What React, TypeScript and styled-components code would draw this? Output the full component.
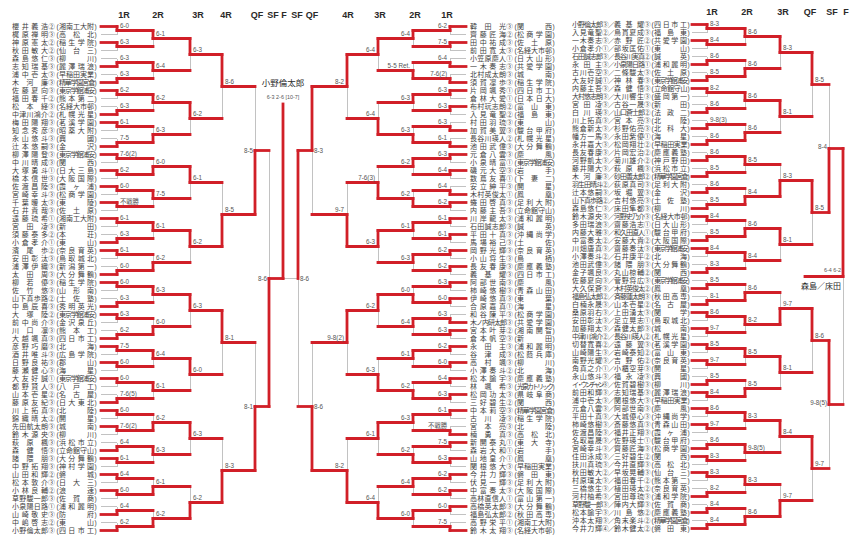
import React from 'react'
import styled, { createGlobalStyle } from 'styled-components'

const GlobalStyle = createGlobalStyle`
  html, body {
    margin: 0;
    padding: 0;
    background: #fff;
  }
  body {
    font-family: 'Liberation Sans', 'Noto Sans CJK JP', sans-serif;
  }
`

const RED = '#d11f28'
const GRAY = '#c2c2c2'
const GRADE = ['', '①', '②', '③', '④']

type SEntry = [string, number, string]
type DEntry = [string, number, string, number, string]
type Seg = [number, number, number, number, boolean]
type Label = { x: number; y: number; t: string; a: 'start' | 'end' | 'middle' }

const LEFT: SEntry[] = [
  ['櫻井義浩', 2, '湘南工大附'], ['梶原禅明', 3, '高松北'], ['神原憲太', 2, '稲生学院'], ['秋田敏大', 2, '仙台三'],
  ['森島悠仁', 3, '柳川'], ['志知瑞基', 3, '麗澤瑞浪'], ['浦中壱太', 3, '早稲田実業'], ['木河廉', 3, '精華学園宮倉'],
  ['佐藤夏向', 3, '東京学館浦安'], ['福田春千', 2, '熊本第二'], ['松本経', 3, '名経大市邨'], ['中津川鴻介', 2, '札幌光星'],
  ['梅田陽翔', 3, '茗溪学園'], ['知念秀彦', 3, '昭薬大附'], ['永山悠斗', 3, '興國'], ['辻本悠嗣', 3, '金沢'],
  ['柳澤陽登', 3, '東京学館浦安'], ['中川晴成', 3, '関西'], ['大塚勇斗', 1, '日大三島'], ['橋本信世', 3, '大阪国際'],
  ['佐渡昌陸', 3, '霞ヶ浦'], ['宮崎幸斗', 3, '松商学園'], ['千葉暖太', 3, '東陵'], ['石井貴哉', 3, '佐土原'],
  ['遠藤琉希', 1, '湘南工大附'], ['宮田凌', 3, '新田'], ['須藤泰多', 2, '本荘'], ['小倉孝介', 1, '東山'],
  ['濱尾歩', 2, '奈良育英'], ['安田彰汰', 3, '鳥取城北'], ['浦澤伊織', 3, '新潟第一'], ['太田周', 3, '大分舞鶴'],
  ['柳若優', 3, '稲生学院'], ['佐竹悠', 3, '山形南'], ['山下真歩路', 2, '土佐塾'], ['中島辰喜', 3, '秀明英光'],
  ['大塚陸', 2, '東京学館浦安'], ['前中尚介', 3, '金沢泉丘'], ['川口凛', 3, '熊本工'], ['大越颯真', 3, '四日市工'],
  ['彦野巧磨', 3, '北海'], ['酒井唯斗', 3, '広島学院'], ['日野良祐', 3, '郡山'], ['藤瀬健心', 3, '海星'],
  ['大友好誠', 1, '東京学館浦安'], ['都野賢人', 3, '八戸工'], ['山本壱星', 2, '名古屋'], ['藤原友紀', 3, '日大東北'],
  ['川上拓真', 3, '北陸'], ['錦織晴太', 2, '開星'], ['先田航太朗', 3, '城南'], ['鈴木源央', 3, '柳川'],
  ['萩原楓', 3, '浜松市立'], ['森健悟', 3, '立命館守山'], ['諸隈朋', 3, '大分舞鶴'], ['中野拓翔', 3, '神村学園'],
  ['山田和輝', 2, '磐城'], ['松本敦介', 3, '日大三'], ['小林良輔', 2, '浪速'], ['草野駿一郎', 3, '佐賀商'],
  ['小泉陽日路', 1, '浦和麗明'], ['山崎敬史', 3, '防府'], ['中嶋啓志', 2, '東山'], ['小野倫太郎', 3, '四日市工'],
]

const RIGHT: SEntry[] = [
  ['韓田光', 3, '関西'], ['齊藤匠海', 2, '松商学園'], ['田中祐成', 3, '佐土原'], ['前田寛太', 3, '名経大市邨'],
  ['小笠原慶人', 1, '日大山形'], ['一木奏志', 3, '共愛学園'], ['北村成太朗', 3, '城南'], ['須賀凜歩', 3, '稲生学院'],
  ['片岡颯秀', 1, '四日市工'], ['倉林大愛', 1, '日本日大'], ['布村玩志朗', 2, '富山東'], ['入見竜聖', 2, '福島東'],
  ['村田羽琉', 3, '東山'], ['加賀美翼', 3, '駿台甲府'], ['長谷川瑛人', 2, '札幌光星'], ['池田武偉', 3, '大分舞鶴'],
  ['元倉八雲', 3, '慶風'], ['小泉晴富', 1, '東京学館浦安'], ['磯元大空', 3, '岩手'], ['数蔦友喜', 1, '下妻二'],
  ['安立紳平', 3, '開星'], ['木村英俊太', 1, '鳳凰'], ['蜷田啓真', 3, '足利大附'], ['内藤主吾', 3, '立命館守山'],
  ['川岸龍太', 3, '浦和麗明'], ['石田誠志郎', 3, '誠英'], ['平田十真', 3, '沖縄尚学'], ['馬場裕己', 3, '土佐'],
  ['岡野光輝', 3, '奈良育英'], ['小山将生', 3, '鳥栖'], ['長友春康', 3, '慶應義塾'], ['義基耀', 3, '四日市工'],
  ['阿部世南', 3, '慶風'], ['柿崎悠樹', 3, '青森山田'], ['伊崎悠真', 3, '東葉'], ['合原嘉真', 1, '海星'],
  ['和谷陳平', 3, '松商学園'], ['木ノ内研太郎', 3, '共愛学園'], ['宮本叶芽', 2, '湘南開智'], ['倉本帆空', 3, '新田'],
  ['永田主', 3, '浦和麗明'], ['谷津成', 3, '松蔭兵庫'], ['高村颯', 3, '柳川'], ['小澤奏斗', 2, '北海'],
  ['松本諭宇', 3, '慶應義塾'], ['林颯希', 3, '光泉カトリック'], ['松岡功太', 3, '県岐阜商'], ['三好碧生', 2, '関西'],
  ['中本莉空', 3, '精華学園宮倉'], ['古川凌', 3, '稲生学院'], ['宮本亮', 3, '北陸'], ['楠勇真', 3, '高松北'],
  ['新開泰丸', 1, '東大寺'], ['森岩大和', 1, '岩手'], ['山地皇介', 1, '鳳凰'], ['関根悠大', 3, '早稲田実業'],
  ['今井力輝', 3, '磐田東'], ['伏見一輝', 3, '足利大附'], ['中富奏太', 3, '大阪国際'], ['高林直信人', 1, '富山第一'],
  ['高橋英太郎', 3, '大分舞鶴'], ['福島弘太郎', 2, '秋田高専'], ['高野栄平', 1, '湘南工大附'], ['鈴木太翔', 3, '名経大市邨'],
]

const DOUBLES: DEntry[] = [
  ['小野倫太郎', 3, '義基耀', 3, '四日市工'], ['入見竜聖', 2, '鳥貫夏成', 3, '福島東'],
  ['一木奏志', 3, '赤野匠', 2, '共愛学園'], ['小倉孝介', 1, '部坂匡佑', 1, '東山'],
  ['石田誠志郎', 3, '長谷川実真', 2, '誠英'], ['永田主', 3, '小泉陽日路', 1, '浦和麗明'],
  ['古川壱空', 3, '二條駿太', 3, '佐土原'], ['大友好誠', 1, '神林春', 3, '東京学館浦安'],
  ['内藤主吾', 3, '森健悟', 3, '立命館守山'], ['大村悠志朗', 3, '大川響生', 3, '盛岡第一'],
  ['宮田凌', 3, '古谷一晟', 3, '新田'], ['白川瑛', 3, '山口蒼士郎', 2, '法政二'],
  ['川上拓真', 3, '宮本亮', 3, '北陸'], ['熊倉新太', 3, '杉野佑亮', 3, '北科大'],
  ['幡方一馬', 3, '永田紫優', 1, '海星'], ['永井嘉大', 3, '松岡翔壮', 2, '早稲田実業'],
  ['長友春康', 3, '片岡宏治', 2, '慶應義塾'], ['河野凱太', 3, '菊川雄介', 2, '神戸野田'],
  ['藤井陽大', 3, '萩原楓', 3, '浜松市立'], ['木河廉', 3, '砂田善太郎', 2, '精華学園宮倉'],
  ['羽生田晴斗', 2, '荻原真司', 3, '足利大附'], ['辻本悠嗣', 3, '坂堀翼', 3, '金沢'],
  ['山下真歩路', 2, '吉村悠亮', 3, '土佐塾'], ['森島悠仁', 3, '床田隼都', 3, '柳川'],
  ['鈴木源央', 3, '河野史乃介', 3, '名経大市邨'], ['多田瑞浪', 3, '齋藤浩志', 1, '日大山形'],
  ['内藤大雅', 3, '和久田直人', 1, '駿台甲府'], ['中富奏太', 2, '安藤大貴', 2, '大阪国際'],
  ['川畑唐真', 3, '齋藤奏汰', 3, '東京学館浦安'], ['小澤奏斗', 2, '石井康平', 2, '北海'],
  ['池田武偉', 3, '諸隈朋', 3, '大分舞鶴'], ['金子颯良', 3, '丸山椋輔', 2, '関西'],
  ['佐藤夏向', 3, '菅野将広', 3, '東京学館浦安'], ['大久保蒼', 3, '木村英俊太', 2, '鳳凰'],
  ['福島弘太郎', 2, '斉藤蓮太朗', 3, '秋田高専'], ['白楠永晟', 3, '山本壱星', 2, '名古屋'],
  ['桑原羽右', 3, '上田湧太', 3, '関学'], ['安田彰汰', 3, '足立晃志', 1, '鳥取城北'],
  ['加藤翔太', 3, '森健太郎', 3, '城南'], ['中津川鴻介', 2, '長谷川瑛人', 2, '札幌光星'],
  ['切替寛喜', 2, '遠藤翼', 3, '茗溪学園'], ['山崎陽生', 3, '岩崎泰知', 2, '富山東'],
  ['南野光耀', 3, '吉野佑', 2, '奈良育英'], ['角真之介', 1, '小櫃空芽', 3, '開星'],
  ['永山悠斗', 3, '福永凌', 3, '興國'], ['イ・ウンチャン', 3, '佐賀碧樹', 3, '柳川'],
  ['前田和輝', 3, '志知瑞基', 3, '麗澤瑞浪'], ['浦中壱太', 3, '関根悠大', 3, '早稲田実業'],
  ['元倉八雲', 3, '阿部世南', 3, '慶風'], ['平田十真', 3, '大城優心', 3, '沖縄尚学'],
  ['柿崎悠樹', 3, '斎藤悠真', 3, '青森山田'], ['佐渡昌陸', 3, '福井正翔', 3, '霞ヶ浦'],
  ['名取嘉晟', 3, '佐野瑛士', 1, '駿台甲府'], ['宮崎幸斗', 3, '齊藤匠海', 3, '松商学園'],
  ['住田泳成', 3, '三好碧生', 2, '関西'], ['扶川真琉', 3, '今井直輝', 3, '高松北'],
  ['秋田敏大', 2, '早坂晃輔', 3, '仙台三'], ['村原璞太', 3, '福田春千', 2, '熊本第二'],
  ['三橋悠生', 3, '植田瑛太', 2, '奈良育英'], ['河村柚希', 3, '宮田尊琉', 3, '浦和学院'],
  ['草野駿一郎', 3, '陣内大輝', 3, '佐賀商'], ['松本諭宇', 3, '川島悠', 2, '慶應義塾'],
  ['沖本太翔', 3, '角末楽斗', 2, '精華学園宮倉'], ['今井力輝', 4, '鈴木健太', 2, '磐田東'],
]

// winners per round: 0 = upper entry, 1 = lower entry
const LEFT_WIN = [
  [0, 0, 1, 1, 0, 1, 0, 1, 0, 0, 0, 0, 0, 1, 0, 1, 0, 1, 0, 1, 0, 0, 0, 1, 0, 0, 1, 0, 0, 0, 1, 1],
  [0, 0, 0, 1, 1, 0, 0, 1, 0, 1, 0, 0, 1, 0, 1, 1],
  [0, 0, 0, 0, 0, 0, 0, 1],
  [0, 1, 0, 1],
  [1, 1],
  [1],
]
const LEFT_SCORE = [
  ['6-0', '6-3', '6-3', '6-3', '6-2', '6-3', '6-1', '7-5', '7-6(2)', '6-2', '6-0', '不戦勝', '6-1', '6-3', '6-1', '6-0',
    '6-0', '6-3', '6-3', '6-2', '7-5', '6-0', '6-0', '7-6(5)', '6-0', '7-6(2)', '6-4', '6-1', '6-4', '6-0', '6-4', '6-2'],
  ['6-1', '6-4', '6-2', '6-3', '6-0', '7-5', '6-1', '6-2', '6-3', '6-0', '6-4', '6-1', '6-2', '6-3', '6-1', '6-2'],
  ['6-3', '6-2', '6-1', '6-2', '6-3', '6-0', '6-3', '6-2'],
  ['8-6', '8-5', '8-1', '8-3'],
  ['8-5', '8-1'],
  ['8-6'],
]

const RIGHT_WIN = [
  [0, 0, 1, 1, 0, 0, 1, 1, 0, 0, 1, 0, 0, 0, 0, 0, 0, 0, 1, 0, 0, 0, 0, 0, 0, 1, 0, 0, 0, 0, 0, 1],
  [0, 1, 0, 1, 0, 1, 0, 0, 1, 0, 0, 1, 0, 1, 0, 0],
  [0, 1, 1, 0, 0, 1, 0, 1],
  [0, 1, 0, 1],
  [0, 1],
  [0],
]
const RIGHT_SCORE = [
  ['6-2', '7-5', '6-4', '7-6(2)', '6-3', '6-3', '6-3', '6-1', '6-3', '6-4', '6-4', '6-2', '6-1', '6-1', '6-2', '6-2',
    '6-3', '6-0', '6-3', '6-3', '6-2', '6-0', '6-4', '6-3', '6-1', '不戦勝', '7-5', '6-3', '6-2', '6-2', '6-0', '7-5'],
  ['6-4', '5-5 Ret.', '6-3', '6-3', '6-2', '6-2', '6-1', '6-3', '6-0', '6-4', '6-1', '6-2', '6-3', '6-2', '6-4', '6-0'],
  ['6-4', '6-4', '7-6(3)', '6-3', '6-2', '6-3', '6-1', '6-4'],
  ['8-2', '9-7', '9-8(2)', '8-2'],
  ['8-3', '8-6'],
  ['8-6'],
]

const DBL_WIN = [
  [0, 0, 1, 1, 0, 1, 1, 1, 1, 1, 1, 1, 0, 1, 0, 1, 1, 1, 0, 0, 0, 0, 1, 0, 0, 0, 1, 0, 0, 1, 1, 1],
  [0, 1, 0, 1, 0, 1, 1, 0, 1, 0, 0, 1, 0, 0, 0, 1],
  [0, 0, 1, 0, 1, 0, 0, 1],
  [0, 0, 0, 0],
  [1, 0],
  [0],
]
const DBL_SCORE = [
  ['8-3', '8-4', '8-6', '8-5', '8-2', '8-6', '9-8(3)', '8-6', '8-6', '8-5', '8-6', '8-5', '8-4', '8-5', '8-4', '8-3',
    '8-5', '8-1', '8-6', '9-7', '8-5', '9-7', '8-5', '8-4', '8-6', '9-7', '8-6', '8-3', '8-3', '8-2', '8-4', '8-4'],
  ['8-6', '8-6', '8-6', '8-6', '8-5', '8-4', '8-6', '8-4', '8-6', '8-2', '8-5', '8-5', '8-3', '9-8(5)', '8-3', '8-6'],
  ['8-3', '8-1', '8-3', '8-1', '9-7', '8-1', '8-4', '9-7'],
  ['8-5', '8-5', '8-6', '9-7'],
  ['8-4', '9-8(5)'],
  [''],
]

const SINGLES_HEAD: [number, string][] = [
  [124, '1R'], [158, '2R'], [198, '3R'], [226, '4R'], [257, 'QF'], [273, 'SF'], [284, 'F'],
  [297, 'SF'], [312, 'QF'], [348, '4R'], [380, '3R'], [415, '2R'], [447, '1R'],
]
const DOUBLES_HEAD: [number, string][] = [
  [712, '1R'], [747, '2R'], [783, '3R'], [810, 'QF'], [832, 'SF'], [846, 'F'],
]

const len = (s: string) => Array.from(s).length
const squeeze = (s: string, w: number) => Math.min(0, (w - len(s) * 7) / len(s))

function build(
  ys: number[],
  x0: number,
  xs: number[],
  win: number[][],
  sc: string[][],
  dir: number,
  pos: string[],
) {
  const segs: Seg[] = []
  const labels: Label[] = []
  let cur = ys
  xs.forEach((X, L) => {
    const next: number[] = []
    for (let m = 0; m < cur.length / 2; m++) {
      const a = cur[2 * m]
      const b = cur[2 * m + 1]
      const w = win[L][m]
      const mid = (a + b) / 2
      if (L === 0) {
        segs.push([x0, a, X, a, w === 0])
        segs.push([x0, b, X, b, w === 1])
      }
      segs.push([X, w ? b : a, X, mid, true])
      segs.push([X, w ? a : b, X, mid, false])
      if (L < xs.length - 1) segs.push([X, mid, xs[L + 1], mid, true])
      const t = sc[L][m]
      const p = pos[L]
      if (p === 'after') labels.push({ x: X + dir * 3, y: mid - 3, t, a: dir > 0 ? 'start' : 'end' })
      else if (p === 'mid') labels.push({ x: X - dir * 2, y: mid + 2, t, a: dir > 0 ? 'end' : 'start' })
      else if (p === 'before') labels.push({ x: X - dir * 2, y: mid, t, a: dir > 0 ? 'end' : 'start' })
      next.push(mid)
    }
    cur = next
  })
  return { segs, labels, out: cur }
}

const rows = (top: number) => Array.from({ length: 64 }, (_, i) => top + 8 * i)

const left = build(rows(26.5), 101, [117, 153, 190, 222, 255, 269], LEFT_WIN, LEFT_SCORE, 1,
  ['after', 'after', 'after', 'after', 'mid', 'mid'])
const right = build(rows(26.5), 466, [450, 413, 378, 347, 312, 298], RIGHT_WIN, RIGHT_SCORE, -1,
  ['after', 'after', 'after', 'after', 'mid', 'mid'])
const finalY = left.out[0]
const singlesFinal: Seg[] = [
  [298, finalY, 283, finalY, false],
  [269, finalY, 283, finalY, true],
  [283, finalY, 283, 104, true],
]

const dbl = build(rows(24.5), 692, [707, 745, 780, 812, 829, 843], DBL_WIN, DBL_SCORE, 1,
  ['after', 'after', 'after', 'after', 'before', 'none'])
const dblFinalY = dbl.out[0]
const dblFinal: Seg[] = [[843, dblFinalY, 805, dblFinalY, true]]

const Page = styled.div`
  display: flex;
  width: 850px;
  height: 546px;
  overflow: hidden;
  background: #fff;
`

const NameList = styled.div<{ $w: number; $top: number; $pl: number }>`
  display: flex;
  flex-direction: column;
  flex-shrink: 0;
  box-sizing: border-box;
  width: ${(p) => p.$w}px;
  padding: ${(p) => p.$top}px 0 0 ${(p) => p.$pl}px;
`

// Liberation Sans first keeps each text box within the 8px row pitch;
// the kanji themselves come from the CJK fallback.
const Row = styled.div`
  display: flex;
  align-items: center;
  height: 8px;
  font-family: 'Liberation Sans', 'Noto Sans CJK JP', sans-serif;
  font-size: 7px;
  line-height: 8px;
  color: #404040;
  white-space: nowrap;
`

const Fit = styled.span<{ $w: number; $ls: number }>`
  display: inline-block;
  width: ${(p) => p.$w}px;
  height: 8px;
  text-align: justify;
  text-align-last: justify;
  letter-spacing: ${(p) => p.$ls.toFixed(2)}px;
`

const Grade = styled.span<{ $w: number }>`
  display: inline-block;
  width: ${(p) => p.$w}px;
  height: 8px;
  text-align: center;
  font-size: 6.5px;
`

const Slash = styled.span`
  display: inline-block;
  width: 6px;
  height: 8px;
  text-align: center;
  font-size: 6.5px;
`

const School = styled.span`
  display: inline-flex;
  align-items: center;
  margin-left: 1px;
`

const Paren = styled.span`
  display: inline-block;
  width: 3px;
  height: 8px;
  text-align: center;
  font-size: 6.5px;
`

const Svg = styled.svg`
  display: block;
  flex-shrink: 0;
  overflow: visible;
`

const RedLine = styled.line`
  stroke: ${RED};
  stroke-width: 2.8;
  stroke-linecap: square;
`

const GrayLine = styled.line`
  stroke: ${GRAY};
  stroke-width: 1;
  shape-rendering: crispEdges;
`

const Head = styled.text`
  font-family: 'Liberation Sans', Arial, sans-serif;
  font-weight: bold;
  font-size: 9px;
  fill: #2a2a2a;
  text-anchor: middle;
`

const Score = styled.text`
  font-family: 'Liberation Sans', 'Noto Sans CJK JP', sans-serif;
  font-size: 6.3px;
  fill: #555;
`

const Winner = styled.text<{ $size: number }>`
  font-family: 'Noto Sans CJK JP', sans-serif;
  font-size: ${(p) => p.$size}px;
  fill: #2a2a2a;
`

const FinalScore = styled.text`
  font-family: 'Liberation Sans', sans-serif;
  font-size: 5.4px;
  fill: #555;
`

const SchoolField: React.FC<{ name: string; w: number }> = ({ name, w }) => (
  <School>
    <Paren>(</Paren>
    <Fit $w={w} $ls={squeeze(name, w)}>{name}</Fit>
    <Paren>)</Paren>
  </School>
)

const SinglesRow: React.FC<{ e: SEntry }> = ({ e }) => (
  <Row>
    <Fit $w={36} $ls={squeeze(e[0], 36)}>{e[0]}</Fit>
    <Grade $w={7}>{GRADE[e[1]]}</Grade>
    <SchoolField name={e[2]} w={35} />
  </Row>
)

const DoublesRow: React.FC<{ e: DEntry }> = ({ e }) => (
  <Row>
    <Fit $w={30} $ls={squeeze(e[0], 30)}>{e[0]}</Fit>
    <Grade $w={6}>{GRADE[e[1]]}</Grade>
    <Slash>／</Slash>
    <Fit $w={30} $ls={squeeze(e[2], 30)}>{e[2]}</Fit>
    <Grade $w={6}>{GRADE[e[3]]}</Grade>
    <SchoolField name={e[4]} w={33} />
  </Row>
)

const Lines: React.FC<{ segs: Seg[] }> = ({ segs }) => (
  <>
    {segs.filter((s) => !s[4]).map((s, i) => (
      <GrayLine key={`g${i}`} x1={s[0]} y1={s[1]} x2={s[2]} y2={s[3]} />
    ))}
    {segs.filter((s) => s[4]).map((s, i) => (
      <RedLine key={`r${i}`} x1={s[0]} y1={s[1]} x2={s[2]} y2={s[3]} />
    ))}
  </>
)

const Labels: React.FC<{ labels: Label[] }> = ({ labels }) => (
  <>
    {labels.map((l, i) => (
      <Score key={i} x={l.x} y={l.y} textAnchor={l.a}>{l.t}</Score>
    ))}
  </>
)

export default function App() {
  return (
    <>
      <GlobalStyle />
      <Page>
        <NameList $w={100} $top={22.5} $pl={12}>
          {LEFT.map((e, i) => <SinglesRow key={i} e={e} />)}
        </NameList>

        <Svg width={367} height={546} viewBox="100 0 367 546">
          {SINGLES_HEAD.map(([x, t], i) => <Head key={i} x={x} y={18.3}>{t}</Head>)}
          <Lines segs={[...left.segs, ...right.segs, ...singlesFinal]} />
          <Labels labels={[...left.labels, ...right.labels]} />
          <Winner $size={8.5} x={283} y={86} textAnchor="middle">小野倫太郎</Winner>
          <FinalScore x={283} y={99} textAnchor="middle">6-3 2-6 [10-7]</FinalScore>
        </Svg>

        <NameList $w={100} $top={22.5} $pl={3}>
          {RIGHT.map((e, i) => <SinglesRow key={i} e={e} />)}
        </NameList>

        <NameList $w={125} $top={20.5} $pl={5}>
          {DOUBLES.map((e, i) => <DoublesRow key={i} e={e} />)}
        </NameList>

        <Svg width={158} height={546} viewBox="692 0 158 546">
          {DOUBLES_HEAD.map(([x, t], i) => <Head key={i} x={x} y={15.3}>{t}</Head>)}
          <Lines segs={[...dbl.segs, ...dblFinal]} />
          <Labels labels={dbl.labels} />
          <FinalScore x={841} y={272} textAnchor="end">6-4 6-2</FinalScore>
          <Winner $size={8} x={841} y={289} textAnchor="end">森島／床田</Winner>
        </Svg>
      </Page>
    </>
  )
}
